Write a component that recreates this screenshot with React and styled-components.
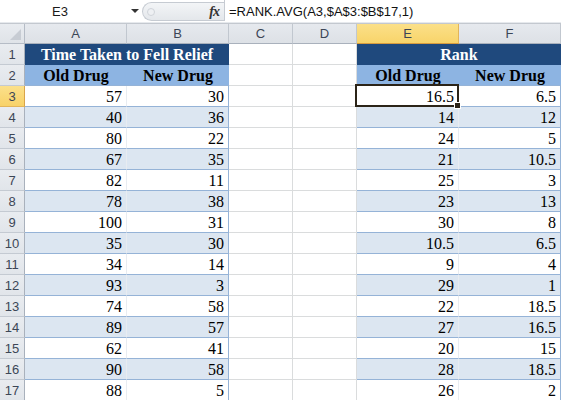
import React from "react";
import styled, { createGlobalStyle, css } from "styled-components";

const Global = createGlobalStyle`
  html, body { margin: 0; padding: 0; background: #fff; }
  body { font-family: "Liberation Sans", Arial, sans-serif; }
  * { box-sizing: border-box; }
`;

const Page = styled.div`
  width: 561px;
  height: 400px;
  overflow: hidden;
  display: flex;
  flex-direction: column;
`;

const FormulaBar = styled.div`
  height: 24px;
  display: flex;
  align-items: stretch;
  background: #fff;
  border-bottom: 1px solid #c3c8cf;
  box-shadow: inset 0 -1px 0 #e6e9ed;
  padding-bottom: 2px;
`;

const NameBox = styled.div`
  width: 142px;
  flex: none;
  display: flex;
  align-items: center;
  font-size: 13px;
  color: #1a1a1a;
  padding-top: 1px;
`;

const NameText = styled.span`
  width: 120px;
  text-align: center;
`;

const DropArrow = styled.span`
  width: 0;
  height: 0;
  border-left: 4px solid transparent;
  border-right: 4px solid transparent;
  border-top: 4px solid #333;
  margin-left: 11px;
`;

const Capsule = styled.div`
  width: 82px;
  flex: none;
  margin: 2px 0 0 0;
  height: 19px;
  border: 1px solid #c6cbd2;
  border-right: none;
  border-radius: 10px 0 0 10px;
  background: linear-gradient(#f3f5f7, #e4e7eb);
  display: flex;
  align-items: center;
  justify-content: space-between;
  padding: 0 5px 0 4px;
`;

const Dot = styled.span`
  width: 8px;
  height: 8px;
  border-radius: 50%;
  border: 1px solid #d0d4da;
  background: #eef0f3;
`;

const Fx = styled.span`
  font-family: "Liberation Serif", "Times New Roman", serif;
  font-style: italic;
  font-weight: bold;
  font-size: 14px;
  color: #333;
  letter-spacing: -1px;
`;

const FormulaInput = styled.div`
  flex: 1;
  border-left: 1px solid #c6cbd2;
  display: flex;
  align-items: center;
  padding-left: 4px;
  padding-top: 1px;
  font-size: 13px;
  color: #111;
`;

const Sheet = styled.div`
  display: grid;
  grid-template-columns: 25px 102px 102px 64px 64px 102px 102px;
  grid-template-rows: 20px repeat(17, 21px);
`;

const Corner = styled.div`
  background: linear-gradient(#e9ecf0, #dfe3e8);
  border-right: 1px solid #b5bcc6;
  border-bottom: 1px solid #b5bcc6;
  position: relative;
  &::after {
    content: "";
    position: absolute;
    right: 3px;
    bottom: 3px;
    width: 0;
    height: 0;
    border-left: 11px solid transparent;
    border-bottom: 11px solid #c7ccd3;
  }
`;

const ColHead = styled.div`
  font-size: 13px;
  color: #3c4656;
  display: flex;
  align-items: center;
  justify-content: center;
  background: ${(p) =>
    p.$active
      ? "linear-gradient(#fbe089, #f8d46a)"
      : "linear-gradient(#e6e9ee, #dde1e6)"};
  border-right: 1px solid ${(p) => (p.$active ? "#e2b55a" : "#c1c7cf")};
  border-bottom: 1px solid ${(p) => (p.$active ? "#d79c3f" : "#a9b1bc")};
`;

const RowHead = styled.div`
  font-size: 13px;
  color: #3c4656;
  display: flex;
  align-items: center;
  justify-content: center;
  padding-top: 1px;
  background: ${(p) =>
    p.$active
      ? "linear-gradient(#fbe08b, #f8d268)"
      : "linear-gradient(#e9ecf0, #e1e5ea)"};
  border-right: 1px solid ${(p) => (p.$active ? "#d9a44a" : "#a9b1bc")};
  border-bottom: 1px solid ${(p) => (p.$active ? "#e2b55a" : "#c4cad2")};
`;

const Cell = styled.div`
  font-family: "Liberation Serif", "Times New Roman", serif;
  font-size: 16px;
  color: #000;
  display: flex;
  align-items: flex-end;
  justify-content: flex-end;
  padding: 0 4px 0 0;
  border-right: 1px solid #dadcdd;
  border-bottom: 1px solid #dadcdd;
  background: #fff;
  ${(p) =>
    p.$band &&
    css`
      background: #dce6f1;
    `}
  ${(p) =>
    p.$table &&
    css`
      border-bottom-color: #95b3d7;
      border-right-color: ${p.$edge ? "#95b3d7" : "#e8ecf1"};
    `}
  ${(p) =>
    p.$selected &&
    css`
      position: relative;
      &::before {
        content: "";
        position: absolute;
        left: -2px;
        top: -2px;
        right: -1px;
        bottom: -1px;
        border: 2px solid #2b2418;
        pointer-events: none;
      }
      &::after {
        content: "";
        position: absolute;
        right: -3px;
        bottom: -3px;
        width: 5px;
        height: 5px;
        background: #2b2418;
        border: 1px solid #fff;
      }
    `}
`;

const Title = styled.div`
  grid-column: span 2;
  font-family: "Liberation Serif", "Times New Roman", serif;
  font-weight: bold;
  font-size: 16px;
  color: #fff;
  background: #1f497d;
  display: flex;
  align-items: center;
  justify-content: center;
  padding-top: 1px;
  border-bottom: 1px solid #1f497d;
`;

const SubHead = styled.div`
  font-family: "Liberation Serif", "Times New Roman", serif;
  font-weight: bold;
  font-size: 16px;
  color: #000;
  background: #8db4e2;
  display: flex;
  align-items: flex-end;
  justify-content: center;
  border-bottom: 1px solid #95b3d7;
`;

const A = [57, 40, 80, 67, 82, 78, 100, 35, 34, 93, 74, 89, 62, 90, 88];
const B = [30, 36, 22, 35, 11, 38, 31, 30, 14, 3, 58, 57, 41, 58, 5];
const E = [16.5, 14, 24, 21, 25, 23, 30, 10.5, 9, 29, 22, 27, 20, 28, 26];
const F = [6.5, 12, 5, 10.5, 3, 13, 8, 6.5, 4, 1, 18.5, 16.5, 15, 18.5, 2];

export default function App() {
  const cols = ["A", "B", "C", "D", "E", "F"];
  return (
    <Page>
      <Global />
      <FormulaBar>
        <NameBox>
          <NameText>E3</NameText>
          <DropArrow />
        </NameBox>
        <Capsule>
          <Dot />
          <Fx>fx</Fx>
        </Capsule>
        <FormulaInput>=RANK.AVG(A3,$A$3:$B$17,1)</FormulaInput>
      </FormulaBar>
      <Sheet>
        <Corner />
        {cols.map((c) => (
          <ColHead key={c} $active={c === "E"}>
            {c}
          </ColHead>
        ))}

        <RowHead>1</RowHead>
        <Title>Time Taken to Fell Relief</Title>
        <Cell />
        <Cell />
        <Title>Rank</Title>

        <RowHead>2</RowHead>
        <SubHead>Old Drug</SubHead>
        <SubHead>New Drug</SubHead>
        <Cell />
        <Cell />
        <SubHead>Old Drug</SubHead>
        <SubHead>New Drug</SubHead>

        {A.map((a, i) => {
          const row = i + 3;
          const band = i % 2 === 1;
          return (
            <React.Fragment key={row}>
              <RowHead $active={row === 3}>{row}</RowHead>
              <Cell $table $band={band}>{a}</Cell>
              <Cell $table $edge $band={band}>{B[i]}</Cell>
              <Cell />
              <Cell />
              <Cell $table $band={band} $selected={row === 3}>
                {E[i]}
              </Cell>
              <Cell $table $edge $band={band}>{F[i]}</Cell>
            </React.Fragment>
          );
        })}
      </Sheet>
    </Page>
  );
}
